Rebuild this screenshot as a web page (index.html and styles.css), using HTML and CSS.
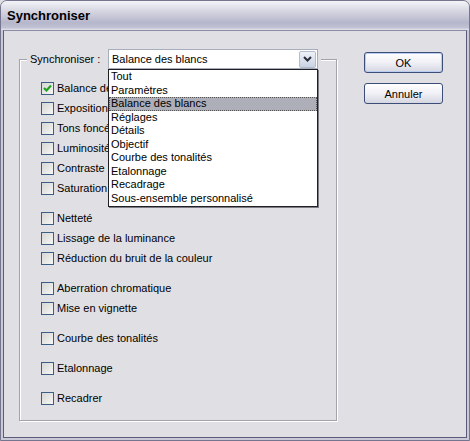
FILE: index.html
```html
<!DOCTYPE html>
<html lang="fr">
<head>
    <meta charset="UTF-8">
    <title>Synchroniser</title>
    <link rel="stylesheet" href="styles.css">
</head>
<body>

    <div class="window">
        <!-- barre de titre -->
        <div class="titlebar">Synchroniser</div>

        <div class="client">
            <fieldset class="group">
                <legend>
                    <div class="legend-row">
                        <label class="sync-label">Synchroniser :</label>
                        <div class="select">
                            <span class="select-value">Balance des blancs</span>
                            <span class="select-btn">
                                <svg width="9" height="6" viewBox="0 0 9 6"><path d="M1 1 L4.5 4.5 L8 1" fill="none" stroke="#2b2b3a" stroke-width="2"/></svg>
                            </span>
                            <!-- liste déroulante ouverte -->
                            <ul class="dropdown">
                                <li>Tout</li>
                                <li>Paramètres</li>
                                <li class="selected">Balance des blancs</li>
                                <li>Réglages</li>
                                <li>Détails</li>
                                <li>Objectif</li>
                                <li>Courbe des tonalités</li>
                                <li>Etalonnage</li>
                                <li>Recadrage</li>
                                <li>Sous-ensemble personnalisé</li>
                            </ul>
                        </div>
                    </div>
                </legend>

                <div class="checks">
                    <div class="check-group">
                        <div class="check"><span class="box checked"><svg width="11" height="11" viewBox="0 0 11 11"><path d="M2 5 L4.5 7.5 L9 2.5" fill="none" stroke="#21a121" stroke-width="2.2"/></svg></span>Balance des blancs</div>
                        <div class="check"><span class="box"></span>Exposition</div>
                        <div class="check"><span class="box"></span>Tons foncés</div>
                        <div class="check"><span class="box"></span>Luminosité</div>
                        <div class="check"><span class="box"></span>Contraste</div>
                        <div class="check"><span class="box"></span>Saturation</div>
                    </div>
                    <div class="check-group">
                        <div class="check"><span class="box"></span>Netteté</div>
                        <div class="check"><span class="box"></span>Lissage de la luminance</div>
                        <div class="check"><span class="box"></span>Réduction du bruit de la couleur</div>
                    </div>
                    <div class="check-group">
                        <div class="check"><span class="box"></span>Aberration chromatique</div>
                        <div class="check"><span class="box"></span>Mise en vignette</div>
                    </div>
                    <div class="check-group">
                        <div class="check"><span class="box"></span>Courbe des tonalités</div>
                    </div>
                    <div class="check-group">
                        <div class="check"><span class="box"></span>Etalonnage</div>
                    </div>
                    <div class="check-group">
                        <div class="check"><span class="box"></span>Recadrer</div>
                    </div>
                </div>
            </fieldset>

            <!-- boutons -->
            <div class="buttons">
                <button class="btn btn-default">OK</button>
                <button class="btn">Annuler</button>
            </div>
        </div>
    </div>

</body>
</html>
```

FILE: styles.css
```css
body {
    margin: 0;
    background: #e0dfe3;
    font-family: "Liberation Sans", Arial, sans-serif;
    font-size: 11px;
    color: #000;
}

.window {
    width: 470px;
    height: 441px;
    box-sizing: border-box;
    border: 1px solid #75758f;
    border-radius: 7px 7px 0 0;
    background: #c9c9d8;
    display: flex;
    flex-direction: column;
    overflow: hidden;
}

/* barre de titre */
.titlebar {
    height: 29px;
    flex: none;
    box-sizing: border-box;
    padding: 7px 0 0 6px;
    font-size: 13px;
    font-weight: bold;
    background: linear-gradient(#f4f4f8, #d6d6e2 35%, #b6b6cc 75%, #c2c2d4 92%, #e4e4ec);
}

.client {
    flex: 1;
    margin: 0 2px 2px;
    background: #e0dfe3;
    border: 1px solid #5c5c7a;
    border-top-color: #8c8ca6;
    display: flex;
    align-items: flex-start;
}

/* cadre */
.group {
    margin: 18px 0 0 15px;
    padding: 0;
    width: 318px;
    height: 372px;
    box-sizing: border-box;
    border: 1px solid #a3a3ab;
    box-shadow: 1px 1px 0 #fff, inset 1px 1px 0 #fff;
    min-inline-size: 0;
}

.group legend {
    margin-left: 7px;
    padding: 0 3px;
    background: #e0dfe3;
}

.legend-row {
    display: flex;
    align-items: center;
}

.sync-label {
    width: 78px;
}

.select {
    position: relative;
    width: 210px;
    height: 20px;
    box-sizing: border-box;
    border: 1px solid #a6aebb;
    background: #fff;
    display: flex;
    align-items: center;
    justify-content: space-between;
}

.select-value {
    padding-left: 3px;
}

.select-btn {
    width: 17px;
    height: 17px;
    margin-right: 1px;
    box-sizing: border-box;
    border: 1px solid #b4bccb;
    border-radius: 2px;
    background: linear-gradient(#eef2f9, #c9d3e3);
    display: flex;
    align-items: center;
    justify-content: center;
}

.dropdown {
    position: absolute;
    top: 19px;
    left: -1px;
    width: 210px;
    box-sizing: border-box;
    margin: 0;
    padding: 0 0 1px;
    list-style: none;
    background: #fff;
    border: 1px solid #1f1f24;
    box-shadow: 1px 1px 0 #7c7c84;
    z-index: 2;
}

.dropdown li {
    height: 13.5px;
    line-height: 13px;
    padding-left: 2px;
    white-space: nowrap;
}

.dropdown li.selected {
    background: #aeaeb9;
    outline: 1px dotted #555;
    outline-offset: -1px;
}

/* cases à cocher */
.checks {
    padding: 9px 0 0 21px;
}

.check-group {
    margin-bottom: 10px;
}

.check {
    height: 20px;
    display: flex;
    align-items: center;
    white-space: nowrap;
}

.box {
    width: 13px;
    height: 13px;
    box-sizing: border-box;
    margin-right: 3px;
    border: 1px solid #3c5e86;
    background: linear-gradient(135deg, #d6d6d4, #f6f6f4);
    display: flex;
    align-items: center;
    justify-content: center;
}

/* boutons */
.buttons {
    margin: 21px 0 0 27px;
    display: flex;
    flex-direction: column;
    gap: 10px;
}

.btn {
    width: 79px;
    height: 21px;
    border: 1px solid #3c4e78;
    border-radius: 3px;
    background: linear-gradient(#ffffff, #f0f0f6 50%, #d6d6e2);
    font-family: "Liberation Sans", Arial, sans-serif;
    font-size: 11px;
    color: #000;
    padding: 0;
}

.btn-default {
    box-shadow: inset 0 0 0 1px #b8cdf0;
}
```
